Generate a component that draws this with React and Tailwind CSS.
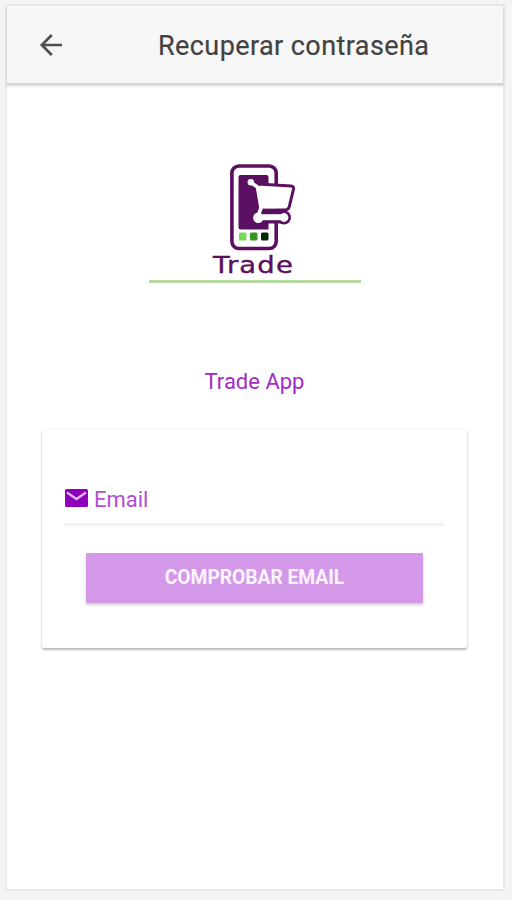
function BackArrow() {
  return (
    <svg className="h-6 w-6" viewBox="0 0 24 24" fill="none" stroke="#505050" strokeWidth="2.7">
      <path d="M23 12H3M12.8 2L2.8 12l10 10" />
    </svg>
  );
}

function Logo() {
  return (
    <svg className="h-[117px] w-[212px]" viewBox="149 162 212 117">
      <rect x="231.9" y="166" width="44.3" height="82.5" rx="7" fill="#fff" stroke="#5a0f60" strokeWidth="3.6" />
      <path d="M240.5 175H266.5Q268.5 175 268.5 177V229.5H240.5Q238.5 229.5 238.5 227.5V177Q238.5 175 240.5 175Z" fill="#5a0f60" />
      <path d="M268.5 184H280V221H268.5Z" fill="#fff" />
      <path d="M258 184L291 186Q294 186.3 293.5 189L289.3 206.5Q288.5 210 285 210H262Z" fill="#fff" stroke="#5a0f60" strokeWidth="3" strokeLinejoin="round" />
      <circle cx="284" cy="217.5" r="7" fill="#5a0f60" />
      <path d="M266 217H284" stroke="#5a0f60" strokeWidth="13" />
      <path d="M251 182.6L257.5 187L261 208L258 216" fill="none" stroke="#fff" strokeWidth="3.6" strokeLinejoin="round" />
      <path d="M256.5 185.8L276 187.5V208.3H261Z" fill="#fff" />
      <circle cx="250.8" cy="182.3" r="3.2" fill="#fff" />
      <path d="M258 217.2H283" stroke="#fff" strokeWidth="6" />
      <circle cx="258.3" cy="217.7" r="5.2" fill="#fff" />
      <circle cx="284" cy="217.5" r="4.4" fill="#fff" />
      <rect x="239" y="232.5" width="7.5" height="8" rx="1.5" fill="#79d957" />
      <rect x="250" y="232.5" width="7.5" height="8" rx="1.5" fill="#36951c" />
      <rect x="261" y="232.5" width="7.5" height="8" rx="1.5" fill="#032806" />
      <text x="213" y="272.5" textLength="81" lengthAdjust="spacingAndGlyphs" className="font-['DejaVu_Sans',sans-serif] text-[23.5px] tracking-[1px]" fill="#5a0f60" stroke="#5a0f60" strokeWidth="0.4">Trade</text>
    </svg>
  );
}

function MailIcon() {
  return (
    <svg className="h-[18px] w-[24px]" viewBox="0 0 24 18">
      <rect x="1" width="23" height="18" rx="1.5" fill="#9000bd" />
      <path d="M3 3.5L12.5 10L22 3.5" fill="none" stroke="#e3b5f0" strokeWidth="2.3" />
    </svg>
  );
}

export default function App() {
  return (
    <div className="h-[900px] w-[512px] bg-[#f4f4f4] pt-[4px] pl-[5px] font-[Roboto,sans-serif]">
      <main className="flex h-[887px] w-[500px] flex-col border-2 border-[#e9e9e9] bg-white">
        <header className="flex h-[77px] shrink-0 items-center bg-[#f7f7f7] pl-[32px] shadow-[0_2px_2px_1px_#d4d4d4]">
          <button aria-label="Volver"><BackArrow /></button>
          <h1 className="ml-[95px] pt-px text-[27px] leading-8 whitespace-nowrap text-[#424242]">
            <svg className="block h-8 w-[272px] overflow-visible" viewBox="0 0 272 32">
              <text x="0" y="25.5" textLength="271" fill="#424242" stroke="#424242" strokeWidth="0.2">Recuperar contraseña</text>
            </svg>
          </h1>
        </header>
        <section className="mt-[79px] flex flex-col items-center pr-[2px]">
          <div className="ml-px border-b-[3px] border-[#b5dba2] pb-[1px]"><Logo /></div>
          <p className="mt-[83px] ml-px text-[22px] leading-8 text-[#a22bc8]">Trade App</p>
        </section>
        <section className="mt-[32px] ml-[35px] h-[218px] w-[425px] rounded-[2px] bg-white px-[22px] pt-[53px] shadow-[0_2px_2px_rgba(0,0,0,0.25),0_0_3px_1px_rgba(0,0,0,0.05)]">
          <label className="flex h-[43px] w-[380px] items-center border-b-[3px] border-[#f2f2f2] pb-[8px] text-[22px] text-[#b14dd2]">
            <span className="-mt-[3px]"><MailIcon /></span>
            <span className="mt-[2px] ml-[6px] leading-7">Email</span>
          </label>
          <button className="mt-[27px] ml-[22px] block h-[50px] w-[337px] rounded-[1px] bg-[#d398e8] text-[19.3px] font-bold tracking-[-0.05px] text-[#fcf5ff] shadow-[0_2px_3px_rgba(0,0,0,0.2)]">
            COMPROBAR EMAIL
          </button>
        </section>
      </main>
    </div>
  );
}
